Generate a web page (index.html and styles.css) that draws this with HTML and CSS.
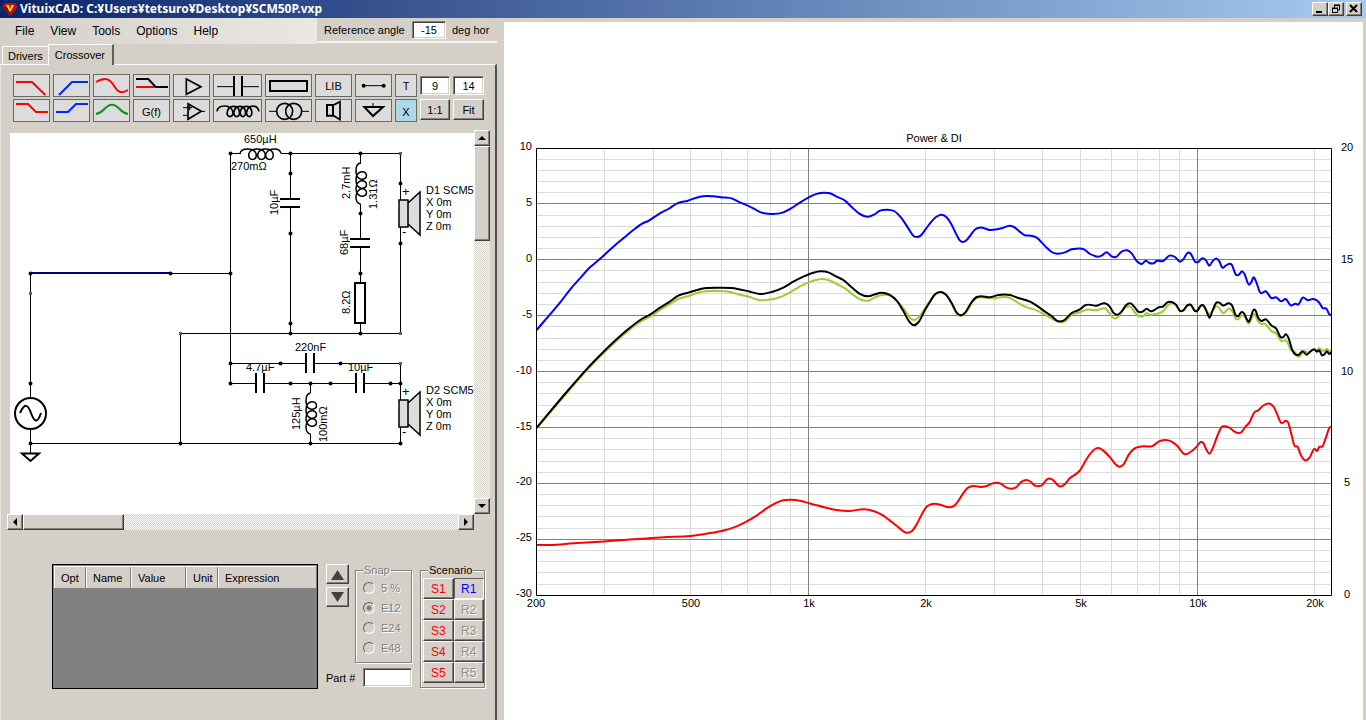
FILE: index.html
```html
<!DOCTYPE html>
<html lang="en">
<head>
<meta charset="utf-8">
<title>VituixCAD</title>
<link rel="stylesheet" href="styles.css">
</head>
<body>
<header class="titlebar">
  <svg class="logo" viewBox="0 0 16 14" width="16" height="14"><path d="M3 1H13L16 5L8 14L0 5Z" fill="#c01010"/><path d="M4 3H7L8 5L9 3H12L10 7L8 10L6 7Z" fill="#f8e020"/><path d="M7 3H9L8 8Z" fill="#c01010"/><path d="M1 5H5L8 13Z" fill="#701010"/></svg>
  <h1 class="caption">VituixCAD: C:¥Users¥tetsuro¥Desktop¥SCM50P.vxp</h1>
  <div class="winbuttons">
    <button class="raised winbtn" aria-label="Minimize"><svg viewBox="0 0 12 10"><path d="M2 8H8" stroke="#000" stroke-width="2"/></svg></button>
    <button class="raised winbtn" aria-label="Restore"><svg viewBox="0 0 12 10"><path d="M4 1.5H10M4.5 1V4M9.5 1V6H7.500M2 4.500H8M2.500 4V9M7.500 4V9M2 8.500H8M4 1H10M2 4H8" fill="none" stroke="#000"/></svg></button>
    <button class="raised winbtn close" aria-label="Close"><svg viewBox="0 0 12 10"><path d="M2 1L9 8M9 1L2 8" stroke="#000" stroke-width="2"/></svg></button>
  </div>
</header>
<main class="workspace">
  <section class="side">
    <div class="menurow">
      <nav class="menu"><button>File</button><button>View</button><button>Tools</button><button>Options</button><button>Help</button></nav>
      <div class="angle"><label for="angle">Reference angle</label><input id="angle" class="field" value="-15"><span>deg hor</span></div>
    </div>
    <div class="tabs" role="tablist"><button class="tab" role="tab">Drivers</button><button class="tab active" role="tab" aria-selected="true">Crossover</button></div>
    <div class="page">
      <div class="toolbar">
        <button class="tool" aria-label="Low pass"><svg viewBox="42 225 105 63"><path class="red" d="M48 246H96L136 285"/></svg></button>
        <button class="tool" aria-label="High pass"><svg viewBox="162 225 105 63"><path class="blue" d="M177 285L216 246H264"/></svg></button>
        <button class="tool" aria-label="All pass"><svg viewBox="282 225 105 63"><path class="red" d="M288 246C318 229 330 238 342 257S362 283 384 270"/></svg></button>
        <button class="tool" aria-label="Shelving"><svg viewBox="402 225 105 63"><path class="red" d="M408 261H464"/><path d="M408 237H445L467 261H504"/></svg></button>
        <button class="tool" aria-label="Buffer"><svg viewBox="522 225 105 63"><path class="mid" d="M559 237L603 260L559 283Z"/></svg></button>
        <button class="tool" aria-label="Capacitor"><svg viewBox="642 225 141 63"><path class="thin" d="M651 260H702M726 260H777"/><path d="M702 228V291M726 228V291"/></svg></button>
        <button class="tool" aria-label="Resistor"><svg viewBox="798 225 135 63"><path d="M810 243H921V273H810Z"/></svg></button>
        <button class="tool">LIB</button>
        <button class="tool" aria-label="Wire"><svg viewBox="1068 225 105 63"><path class="thin" d="M1091 257H1151"/><circle class="dot" cx="1091" cy="257" r="6"/><circle class="dot" cx="1151" cy="257" r="6"/></svg></button>
        <button class="tool">T</button>
        <input class="field size" aria-label="Part size" value="9">
        <input class="field size" aria-label="Text size" value="14">

        <button class="tool" aria-label="Low shelf"><svg viewBox="42 300 105 63"><path class="red" d="M48 312H84L108 336H144"/></svg></button>
        <button class="tool" aria-label="High shelf"><svg viewBox="162 300 105 63"><path class="blue" d="M168 336H204L228 312H264"/></svg></button>
        <button class="tool" aria-label="Peak"><svg viewBox="282 300 105 63"><path class="green" d="M288 342C314 338 315 314 336 314S358 338 384 342"/></svg></button>
        <button class="tool low">G(f)</button>
        <button class="tool" aria-label="Amplifier"><svg viewBox="522 300 105 63"><path class="mid" d="M564 311L604 334L564 358Z"/><path class="thin" d="M549 323H576M569 315V331M549 346H564M604 334H615"/></svg></button>
        <button class="tool" aria-label="Inductor"><svg viewBox="642 300 141 63"><path class="mid" d="M651 334C653 314 690 312 698 333C703 356 677 354 682 335C686 314 714 314 718 333C722 356 698 354 702 335C706 314 732 314 736 333C740 356 718 354 721 335C725 314 751 314 755 333C759 356 737 354 740 335C746 312 772 314 777 334"/></svg></button>
        <button class="tool" aria-label="Transformer"><svg viewBox="798 300 135 63"><path class="thin" d="M807 334H830M906 334H927"/><g class="mid"><circle cx="854" cy="334" r="24"/><circle cx="881" cy="334" r="24"/></g></svg></button>
        <button class="tool" aria-label="Driver"><svg viewBox="948 300 105 63"><path d="M981 315H999V347H981Z"/><path class="mid" d="M999 316L1020 305V359L999 346"/></svg></button>
        <button class="tool" aria-label="Ground"><svg viewBox="1068 300 105 63"><path class="thin" d="M1119 309V321"/><path d="M1093 321H1149L1119 348Z"/></svg></button>
        <button class="tool low selected">X</button>
        <button class="raised zoombtn">1:1</button>
        <button class="raised zoombtn">Fit</button>
      </div>

      <div class="viewer">
        <svg class="schematic" viewBox="10 133 464 381" role="img" aria-label="Crossover schematic">
          <defs>
            <path id="coil" d="M0 0C1-6 14-6 16 0C18 8 7 8 9 0C11-6 23-6 25 0C27 8 16 8 18 0C20-6 31-6 33 0C35 8 24 8 26 0C29-6 40-6 41 0"/>
            <g id="speaker"><path fill="#dcdcdc" d="M399 200H408V227H399ZM408 203L420 192V235L408 224"/></g>
          </defs>
          <path class="wire" d="M230.500 153V384M230 153.500H241M281 153.500H401M290.500 153V199M290.500 207V333M360.500 153V164M360.500 204V238M360.500 247V283M360.500 323V333M400.500 153V200M400.500 227V333M180 333.500H401M180.500 333V443M30 443.500H401M30.500 273V398M30.500 429V453M170 273.500H230M230 363.500H306M314 363.500H401M400.500 363V400M400.500 427V443M230 383.500H256M264 383.500H356M364 383.500H401M310.500 383V393M310.500 434V443"/>
          <path d="M30 273H170" stroke="#000080" stroke-width="2"/>
          <g class="part">
            <path d="M280 199H300M280 207H300M350 239H370M350 247H370M306 353V373M314 353V373M256 373V393M264 373V393M356 373V393M364 373V393"/>
            <path d="M355 283H365V323H355Z"/>
          </g>
          <g class="outline">
            <use class="thin-outline" href="#coil" transform="translate(240 153.500)"/>
            <use class="thin-outline" href="#coil" transform="translate(360.500 163) rotate(90) scale(1 -1)"/>
            <use class="thin-outline" href="#coil" transform="translate(310.500 393) rotate(90) scale(1 -1)"/>
            <use class="thin-outline" href="#speaker"/><use class="thin-outline" href="#speaker" y="200"/>
            <circle cx="30.500" cy="413.500" r="15.500"/>
            <path d="M20 413C25 402 28 405 31 413S37 425 41 413M22 453.500H39L30.500 461Z"/>
          </g>
          <path class="nodes" d="M230.500 153.500h0M290.500 153.500h0M360.500 153.500h0M290.500 173.500h0M290.500 233.500h0M290.500 323.500h0M290.500 333.500h0M360.500 213.500h0M360.500 273.500h0M360.500 333.500h0M400.500 183.500h0M400.500 243.500h0M30.500 273.500h0M170.500 273.500h0M230.500 273.500h0M30.500 383.500h0M30.500 443.500h0M180.500 443.500h0M230.500 363.500h0M230.500 383.500h0M280.500 363.500h0M340.500 363.500h0M290.500 383.500h0M310.500 383.500h0M330.500 383.500h0M390.500 383.500h0M400.500 383.500h0M310.500 443.500h0M400.500 443.500h0"/>
          <path class="corners" d="M30.500 292v3M180.500 332v3M400.500 152v3M400.500 332v3M400.500 362v3"/>
          <g class="values">
            <text x="244" y="143">650µH</text><text x="231" y="170">270mΩ</text>
            <text transform="translate(278 215) rotate(-90)">10µF</text>
            <text transform="translate(350 199) rotate(-90)">2.7mH</text>
            <text transform="translate(377 209) rotate(-90)">1.31Ω</text>
            <text transform="translate(348 255) rotate(-90)">68µF</text>
            <text transform="translate(350 314) rotate(-90)">8.2Ω</text>
            <text class="sign" x="402" y="196">+</text><text class="sign" x="402" y="236">-</text>
            <text x="426" y="194">D1 SCM50</text><text x="426" y="206">X 0m</text><text x="426" y="218">Y 0m</text><text x="426" y="230">Z 0m</text>
            <text x="295" y="351">220nF</text><text x="246" y="371">4.7µF</text><text x="348" y="371">10µF</text>
            <text transform="translate(300 430) rotate(-90)">125µH</text>
            <text transform="translate(327 442) rotate(-90)">100mΩ</text>
            <text class="sign" x="402" y="396">+</text><text class="sign" x="402" y="436">-</text>
            <text x="426" y="394">D2 SCM50</text><text x="426" y="406">X 0m</text><text x="426" y="418">Y 0m</text><text x="426" y="430">Z 0m</text>
          </g>
        </svg>
        <div class="scroll vertical"><button class="raised arrow" aria-label="Scroll up"><svg viewBox="0 0 8 8"><path d="M0 6H8L4 2Z"/></svg></button><div class="raised thumb"></div><button class="raised arrow end" aria-label="Scroll down"><svg viewBox="0 0 8 8"><path d="M0 2H8L4 6Z"/></svg></button></div>
        <div class="scroll horizontal"><button class="raised arrow" aria-label="Scroll left"><svg viewBox="0 0 8 8"><path d="M6 0V8L2 4Z"/></svg></button><div class="raised thumb"></div><button class="raised arrow end" aria-label="Scroll right"><svg viewBox="0 0 8 8"><path d="M2 0V8L6 4Z"/></svg></button></div>
      </div>

      <div class="bottom">
        <div class="params"><table><thead><tr><th class="c-opt">Opt</th><th class="c-name">Name</th><th class="c-value">Value</th><th class="c-unit">Unit</th><th>Expression</th></tr></thead></table></div>
        <div class="middle">
          <div class="middle-top">
            <div class="spin"><button class="raised" aria-label="Increase"><svg viewBox="0 0 15 11"><path d="M1 11H14L7.500 1Z"/></svg></button><button class="raised" aria-label="Decrease"><svg viewBox="0 0 15 11"><path d="M1 0H14L7.500 10Z"/></svg></button></div>
            <fieldset class="group snap" disabled><legend>Snap</legend>
              <label><input type="radio" name="snap">5 %</label><label><input type="radio" name="snap" checked>E12</label><label><input type="radio" name="snap">E24</label><label><input type="radio" name="snap">E48</label>
            </fieldset>
          </div>
          <div class="part-no"><label for="part">Part #</label><input id="part" class="field"></div>
        </div>
        <fieldset class="group scenario"><legend>Scenario</legend>
          <div class="slots">
            <button class="raised save">S1</button><button class="raised recall">R1</button>
            <button class="raised save">S2</button><button class="raised" disabled>R2</button>
            <button class="raised save">S3</button><button class="raised" disabled>R3</button>
            <button class="raised save">S4</button><button class="raised" disabled>R4</button>
            <button class="raised save">S5</button><button class="raised" disabled>R5</button>
          </div>
        </fieldset>
      </div>
    </div>
  </section>
  <section class="chart">
    <svg viewBox="504 22 859 698" role="img" aria-label="Power and DI">
      <path id="minor" class="minor"/><path id="major" class="major"/>
      <g id="curves" class="curves" transform="translate(500 120) scale(.33333)"></g>
      <path class="frame" d="M536.500 148.500H1331.500V595.500H536.500Z"/>
      <g id="labels" class="labels"><text x="934" y="142" text-anchor="middle">Power &amp; DI</text></g>
    </svg>
  </section>
</main>
<script src="chart.js"></script>
</body>
</html>
```
FILE: styles.css
```css
* { box-sizing: border-box; }
body {
  margin: 0;
  min-height: 100vh;
  display: flex;
  flex-direction: column;
  background: #d4d0c8;
  color: #000;
  font: 12px/16px "Liberation Sans", Arial, sans-serif;
}
button, input { font: inherit; color: inherit; margin: 0; border-radius: 0; }
button { padding: 0; background: #d4d0c8; border: 0; }
.raised {
  border: 1px solid;
  border-color: #fff #404040 #404040 #fff;
  box-shadow: inset -1px -1px #808080;
  background: #d4d0c8;
}
.field {
  border: 1px solid;
  border-color: #808080 #fff #fff #808080;
  box-shadow: inset 1px 1px #404040, inset -1px -1px #d4d0c8;
  background: #fff;
  padding: 0 2px;
  min-width: 0;
  font-size: 11px;
}

.titlebar {
  display: flex;
  align-items: center;
  height: 18px;
  padding: 0 4px 0 2px;
  background: linear-gradient(90deg, #0a246a, #a6caf0);
  color: #fff;
}
.caption { flex: 1; margin: 0 0 0 2px; font: 700 12px/18px "Noto Sans", "Liberation Sans", sans-serif; }
.winbuttons { display: flex; }
.winbtn { width: 16px; height: 14px; display: flex; align-items: center; justify-content: center; }
.winbtn svg { width: 12px; height: 10px; }
.close { margin-left: 2px; }

.workspace { flex: 1; display: flex; gap: 7px; padding-right: 3px; }
.side { flex: 0 0 497px; display: flex; flex-direction: column; }
.menurow { display: flex; height: 26px; }
.menu {
  flex: 1;
  display: flex;
  gap: 16px;
  padding-left: 15px;
  background: linear-gradient(90deg, #d4d0c8, #e9e8e4);
}
.menu button { background: none; }
.angle {
  display: flex;
  align-items: center;
  gap: 6px;
  width: 180px;
  padding-left: 7px;
  height: 25px;
  border-bottom: 2px solid #f4f3f0;
  font-size: 11px;
  white-space: nowrap;
}
.angle label { width: 82px; }
.angle .field { width: 34px; height: 18px; text-align: center; }

.tabs { display: flex; align-items: flex-end; height: 20px; padding-left: 2px; }
.tab {
  height: 18px;
  padding: 0 5px;
  border: 1px solid #fff;
  border-width: 1px 0 0 1px;
  font-size: 11px;
}
.tab.active {
  height: 21px;
  margin-bottom: -1px;
  border-right: 2px solid #606060;
  position: relative;
  padding: 0 7px 0 6px;
}
.page {
  flex: 1;
  border: 1px solid;
  border-width: 1px 2px 0 1px;
  border-color: #fff #505050 #fff #e8e6e2;
  padding: 9px 0 0 6px;
}

.toolbar {
  display: grid;
  grid-template-columns: repeat(5, 37px) 49px 47px 37px 37px 22px 30px 31px;
  grid-auto-rows: 23px;
  gap: 2px 3px;
  padding-left: 6px;
  font-size: 11px;
}
.tool { border: 1px solid #696969; background: #dcdcdc; }
.tool.low { padding-top: 3px; }
.tool.selected { background: #add8e6; }
.tool svg { display: block; width: 100%; height: 100%; fill: none; stroke: #000; stroke-width: 6; }
.tool .red { stroke: #f00; }
.tool .blue { stroke: #0028ff; }
.tool .green { stroke: #109020; }
.tool .mid { stroke-width: 5; }
.tool .thin { stroke-width: 3; }
.tool .dot { fill: #000; stroke: none; }
.size { height: 19px; text-align: center; margin-top: 2px; }
.zoombtn { height: 21px; }

.viewer {
  display: grid;
  grid-template-columns: 1fr 16px;
  width: 483px;
  margin-top: 8px;
}
.schematic { display: block; width: calc(100% - 3px); margin: 3px 0 0 3px; background: #fff; fill: none; stroke: #000; }
.wire { stroke-width: 1; }
.part { stroke-width: 2; }
.outline { stroke-width: 2; }
.thin-outline { stroke-width: 1.5; }
.nodes { stroke-width: 4; stroke-linecap: round; }
.corners { stroke: #606060; stroke-width: 3; }
.values { fill: #000; stroke: none; font-size: 11px; }
.sign { font-size: 13px; }
.scroll { display: flex; background: repeating-conic-gradient(#fff 0 25%, #d4d0c8 0 50%) 0 0 / 2px 2px; }
.vertical { flex-direction: column; }
.arrow { width: 16px; height: 16px; display: flex; align-items: center; justify-content: center; }
.arrow svg { width: 8px; height: 8px; }
.end { margin-top: auto; }
.vertical .thumb { height: 95px; }
.horizontal .end { margin: 0 0 0 auto; }
.horizontal .thumb { width: 101px; }

.bottom { display: flex; gap: 8px; margin-top: 32px; padding-left: 45px; font-size: 11px; }
.params { width: 266px; height: 125px; margin-top: 2px; border: 1px solid #000; background: #808080; padding: 1px; }
.params table { width: 100%; border-collapse: collapse; background: #d4d0c8; table-layout: fixed; }
.params th {
  height: 21px;
  padding: 2px 0 0 6px;
  border: 1px solid #fff;
  border-width: 1px 0 0 1px;
  text-align: left;
  font-weight: 400;
  box-shadow: inset -1px 0 #808080;
}
.params th:last-child { box-shadow: none; }
.c-opt { width: 32px; }
.c-name { width: 45px; }
.c-value { width: 55px; }
.c-unit { width: 32px; }
.middle { width: 86px; }
.middle-top { display: flex; justify-content: space-between; }
.spin { display: flex; flex-direction: column; gap: 3px; padding-top: 2px; }
.spin .raised { width: 23px; height: 20px; display: flex; align-items: center; justify-content: center; }
.spin svg { width: 15px; height: 11px; fill: #404040; }
.group { margin: 0; border: 1px solid #808080; box-shadow: 1px 1px #fff, inset 1px 1px #fff; min-width: 0; }
.group legend { padding: 0 1px; background: #d4d0c8; }
.snap { width: 57px; height: 101px; padding: 0 0 0 7px; color: #808080; text-shadow: 1px 1px #fff; }
.snap label { display: flex; align-items: center; gap: 6px; height: 20px; }
.snap legend { margin-left: 0; }
.snap input {
  appearance: none;
  width: 12px;
  height: 12px;
  border: 1px solid;
  border-color: #606060 #fff #fff #606060;
  border-radius: 50%;
}
.snap input:checked { background: radial-gradient(circle, #808080 2px, #d4d0c8 3px); }
.part-no { display: flex; align-items: center; justify-content: space-between; margin-top: 5px; }
.part-no .field { width: 49px; height: 19px; }
.scenario { width: 65px; height: 126px; padding: 0 2px; }
.scenario legend { margin-left: 5px; }
.slots { display: grid; grid-template-columns: 1fr 1fr; grid-auto-rows: 21px; width: 61px; font-size: 12px; }
.save { color: #f00; }
.scenario .recall { color: #00f; border-color: #606060 #fff #fff #606060; box-shadow: none; }
.slots button:disabled { color: #909090; text-shadow: 1px 1px #fff; }

.chart { flex: 1; min-width: 0; margin-top: 4px; background: #fff; }
.chart svg { display: block; width: 100%; }
.minor, .major, .frame, .curves { fill: none; }
.minor { stroke: #dcdcdc; }
.major { stroke: #808080; }
.frame { stroke: #000; }
.curves { stroke-width: 6; stroke-linejoin: round; }
.labels { font-size: 11px; }
```
FILE: chart.js
```js
const LEFT = 536.5, RIGHT = 1331.5, TOP = 148.5, BOTTOM = 595.5;
const fx = f => Math.floor(808.2 + 389.5 * Math.log10(f / 1000)) + 0.5;
const gy = k => Math.floor(148 + k * 11.18) + 0.5;

const minor = [], major = [];
for (let k = 1; k < 40; k++) (k % 5 ? minor : major).push(`M${LEFT} ${gy(k)}H${RIGHT}`);
for (const f of [300, 400, 500, 600, 700, 800, 900, 2000, 3000, 4000, 5000, 6000, 7000, 8000, 9000, 20000])
  minor.push(`M${fx(f)} ${TOP}V${BOTTOM}`);
for (const f of [1000, 10000]) major.push(`M${fx(f)} ${TOP}V${BOTTOM}`);
document.getElementById('minor').setAttribute('d', minor.join(''));
document.getElementById('major').setAttribute('d', major.join(''));

const NS = 'http://www.w3.org/2000/svg';
function label(x, y, text, anchor) {
  const t = document.createElementNS(NS, 'text');
  t.setAttribute('x', x);
  t.setAttribute('y', y);
  t.setAttribute('text-anchor', anchor);
  t.textContent = text;
  document.getElementById('labels').append(t);
}
for (let i = 0; i <= 8; i++) label(532, 150 + Math.round(i * 55.9), String(10 - 5 * i), 'end');
for (let i = 0; i <= 4; i++) label(1347, 151 + Math.round(i * 111.8), String(20 - 5 * i), 'middle');
[[200, '200'], [500, '500'], [1000, '1k'], [2000, '2k'], [5000, '5k'], [10000, '10k'], [20000, '20k']]
  .forEach(([f, s]) => label(Math.floor(fx(f)) + 1, 607, s, 'middle'));

const parse = (s, dx, dy) => s.trim().split(/\s+/).map(p => { const [x, y] = p.split(',').map(Number); return [x + dx, y + dy]; });
function curve(color, low, high, dy = 0) {
  const p = [...parse(low, 0, dy), ...parse(high, 1290, dy)];
  const slope = (a, b) => (b[1] - a[1]) / (b[0] - a[0]);
  const m = p.map((q, i) => {
    if (i === 0) return slope(p[0], p[1]);
    if (i === p.length - 1) return slope(p[i - 1], q);
    const h0 = q[0] - p[i - 1][0], h1 = p[i + 1][0] - q[0];
    return (slope(p[i - 1], q) * h1 + slope(q, p[i + 1]) * h0) / (h0 + h1);
  });
  let d = `M${p[0]}`;
  for (let i = 0; i < p.length - 1; i++) {
    const b = p[i], c = p[i + 1], h = (c[0] - b[0]) / 3;
    d += `C${b[0] + h},${b[1] + m[i] * h} ${c[0] - h},${c[1] - m[i + 1] * h} ${c}`;
  }
  const path = document.createElementNS(NS, 'path');
  path.setAttribute('d', d);
  path.setAttribute('stroke', color);
  document.getElementById('curves').append(path);
}

curve('#9acd32',
  '110,926 205,814 265,746 313,697 385,632 430,600 450,590 480,570 505,555 535,537 565,528 605,515 640,513 690,516 715,523 750,531 775,540 795,541 845,530 875,514 910,494 940,482 965,477 985,480 1010,492 1035,505 1060,525 1080,538 1105,542 1125,532 1145,525 1168,526 1190,542 1212,567 1230,594 1244,600 1258,590 1278,560',
  '0,543 15,524 32,517 48,524 65,551 80,581 92,588 106,580 125,550 140,534 155,532 180,535 240,534 265,549 285,560 320,571 350,587 380,603 390,606 405,604 425,584 450,577 470,569 500,571 528,567 540,582 550,594 562,593 575,574 588,562 602,561 615,578 628,589 640,588 650,579 658,584 675,582 700,573 712,558 725,549 738,555 750,573 760,571 772,556 782,555 795,572 802,571 812,558 820,557 830,572 838,583 848,572 858,560 865,561 878,579 900,566 908,576 918,597 926,597 934,587 944,589 957,611 966,592 974,582 982,600 992,611 1005,611 1025,634 1038,640 1053,662 1070,663 1084,692 1095,697 1104,710 1112,706 1122,694 1134,698 1148,689 1160,692 1168,684 1176,692 1184,691 1190,686 1198,695 1204,694');
curve('#000',
  '110,923 150,875 205,810 240,770 265,742 295,711 313,693 340,667 385,627 430,594 450,584 480,563 505,548 535,527 565,518 605,506 655,503 695,504 750,515 780,522 815,516 850,503 880,485 910,470 940,458 962,454 985,457 1010,470 1030,480 1055,502 1078,521 1105,529 1125,523 1143,518 1168,524 1190,542 1210,573 1228,605 1242,616 1256,606 1275,570',
  '0,545 15,523 32,516 48,524 65,549 80,578 92,586 106,577 125,546 140,531 152,529 180,532 205,525 240,525 265,534 300,545 320,557 345,575 365,588 380,602 400,602 425,579 450,568 465,556 500,557 528,551 540,561 550,578 562,584 575,575 588,556 602,550 615,563 625,575 638,575 650,566 662,574 675,569 685,562 700,559 712,547 725,546 738,554 750,573 760,571 772,556 782,554 795,573 802,573 812,557 820,556 830,575 838,593 848,571 858,549 868,548 878,556 898,550 906,556 918,587 926,587 932,578 942,580 950,597 957,605 963,590 970,570 978,574 983,590 992,602 1008,598 1025,617 1038,625 1053,652 1060,651 1067,643 1076,655 1086,688 1108,703 1116,694 1130,704 1142,694 1154,688 1160,695 1168,691 1176,706 1184,702 1190,694 1198,702 1204,697');
curve('#00f',
  '110,630 145,589 180,548 215,503 240,475 270,442 290,425 313,405 340,380 370,355 400,330 430,309 445,303 460,293 485,277 505,267 530,251 545,246 562,243 580,236 600,230 620,228 640,229 665,232 697,236 715,245 748,259 772,272 785,278 812,282 848,278 872,266 895,251 925,233 945,223 970,218 990,220 1010,230 1035,242 1055,261 1078,281 1105,290 1122,284 1140,272 1160,269 1182,273 1205,295 1225,325 1240,347 1250,351 1262,347 1278,326',
  '0,310 18,291 34,284 48,290 65,314 80,345 90,362 100,366 110,360 122,345 137,327 150,323 180,330 215,325 240,317 252,321 268,334 285,346 300,347 320,353 335,367 350,383 365,396 382,401 405,397 425,388 440,386 462,388 480,402 492,407 503,410 515,407 530,397 545,409 558,411 575,395 592,391 605,400 620,423 635,432 648,422 658,429 670,430 680,423 700,423 718,407 735,411 750,425 760,418 772,399 782,401 795,425 802,427 818,415 828,421 838,437 848,423 860,416 868,424 877,443 887,437 905,434 918,464 928,463 936,454 943,461 957,494 963,488 972,472 978,484 990,517 1008,514 1024,534 1038,532 1054,544 1067,537 1082,556 1097,551 1104,554 1118,533 1134,541 1148,537 1167,547 1178,564 1190,567 1198,583 1204,584');
curve('#f00',
  '110,525 150,525 220,520 300,515 370,510 430,506 500,501 560,499 615,492 660,484 700,473 735,457 765,440 800,415 830,398 850,391 872,389 900,392 925,399 970,411 1010,420 1045,423 1095,418 1120,423 1145,434 1170,452 1200,476 1213,486 1224,488 1235,484 1250,463 1268,428 1280,410',
  '0,404 20,402 35,406 58,412 70,409 82,397 97,374 110,356 125,349 155,351 170,348 185,341 200,338 212,341 230,353 245,356 258,352 275,335 290,330 303,336 315,347 325,349 337,345 350,329 362,326 372,333 385,347 395,349 405,342 420,324 435,314 450,301 465,275 480,252 495,237 507,234 520,242 540,262 560,286 568,290 580,284 595,256 608,240 640,229 665,229 690,213 725,215 740,226 765,253 775,250 800,230 812,216 820,219 830,241 838,251 848,235 862,198 875,171 885,169 900,174 912,184 934,187 948,168 958,158 973,127 985,121 998,108 1025,104 1032,112 1042,134 1052,157 1060,158 1067,152 1074,157 1084,192 1093,226 1103,231 1112,254 1125,271 1138,264 1154,236 1161,243 1168,230 1177,230 1188,202 1198,174 1204,169', 750);
```
